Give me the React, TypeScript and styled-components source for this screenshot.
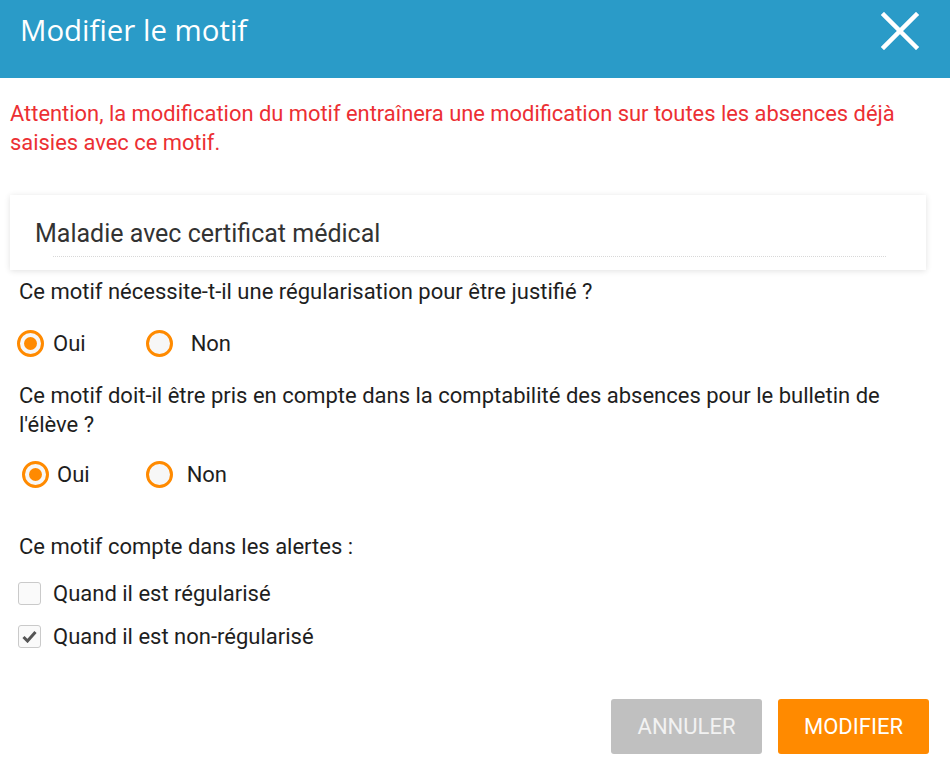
import React from "react";
import styled, { createGlobalStyle } from "styled-components";

const Global = createGlobalStyle`
  html, body { margin: 0; padding: 0; background: #fff; }
  body { font-family: Roboto, "Noto Sans", sans-serif; color: #222; width: 950px; height: 768px; overflow: hidden; }
  * { box-sizing: border-box; }
`;

const Dialog = styled.div`
  width: 950px;
  height: 768px;
  display: flex;
  flex-direction: column;
  background: #fff;
`;

const Header = styled.div`
  height: 78px;
  background: #2a9bc8;
  display: flex;
  align-items: center;
  justify-content: space-between;
  padding: 0 30px 0 20px;
  flex-shrink: 0;
`;

const Title = styled.h1`
  margin: 0;
  font-family: "Open Sans", Roboto, sans-serif;
  font-weight: 400;
  font-size: 29.4px;
  color: #fff;
  position: relative;
  top: -9px;
`;

const CloseBtn = styled.button`
  background: none;
  border: none;
  padding: 0;
  width: 40px;
  height: 40px;
  display: flex;
  align-items: center;
  justify-content: center;
  cursor: pointer;
  position: relative;
  top: -8px;
`;

const Body = styled.div`
  flex: 1;
  display: flex;
  flex-direction: column;
  padding: 21px 21px 0 10px;
`;

const Warning = styled.p`
  margin: 0;
  color: #ec2f33;
  font-size: 21.9px;
  line-height: 29px;
`;

const Card = styled.div`
  margin-top: 38px;
  width: 916px;
  height: 75px;
  background: #fff;
  box-shadow: 0 1px 6px rgba(0, 0, 0, 0.12);
  padding: 24px 0 0 25px;
`;

const CardText = styled.div`
  font-size: 25px;
  color: #333;
  line-height: 30px;
`;

const Dotted = styled.div`
  margin: 7px 0 0 18px;
  width: 833px;
  border-bottom: 1.5px dotted #d8d8d8;
`;

const Question = styled.p<{ $top: number }>`
  margin: ${(p) => p.$top}px 0 0 9px;
  font-size: 22px;
  line-height: 29px;
  color: #1e1e1e;
`;

const RadioRow = styled.div<{ $top: number; $left: number; $gap: number }>`
  display: flex;
  align-items: center;
  height: 27px;
  margin: ${(p) => p.$top}px 0 0 ${(p) => p.$left}px;
  gap: ${(p) => p.$gap}px;
`;

const RadioOpt = styled.label<{ $labelGap: number }>`
  display: flex;
  align-items: center;
  gap: ${(p) => p.$labelGap}px;
  font-size: 22px;
  color: #1e1e1e;
`;

const RadioCircle = styled.span<{ $on: boolean }>`
  width: 27px;
  height: 27px;
  border-radius: 50%;
  border: 3px solid #ff8a00;
  background: #f7f7f7;
  display: flex;
  align-items: center;
  justify-content: center;
  &::after {
    content: "";
    width: 13px;
    height: 13px;
    border-radius: 50%;
    background: ${(p) => (p.$on ? "#ff8a00" : "transparent")};
  }
`;

const CheckRow = styled.label<{ $top: number }>`
  display: flex;
  align-items: center;
  gap: 12px;
  height: 26px;
  margin: ${(p) => p.$top}px 0 0 8px;
  font-size: 22px;
  color: #1e1e1e;
`;

const Box = styled.span`
  width: 23px;
  height: 23px;
  border: 1px solid #cacaca;
  border-radius: 3px;
  background: #fafafa;
  display: flex;
  align-items: center;
  justify-content: center;
`;

const Footer = styled.div`
  display: flex;
  justify-content: flex-end;
  gap: 16px;
  margin-top: auto;
  padding: 0 0 14px 0;
`;

const Btn = styled.button<{ $primary?: boolean }>`
  width: 151px;
  height: 55px;
  border: none;
  border-radius: 3px;
  font-family: Roboto, sans-serif;
  font-size: 22px;
  text-transform: uppercase;
  color: ${(p) => (p.$primary ? "#fff" : "#f2f2f2")};
  background: ${(p) => (p.$primary ? "#ff8a00" : "#c0c0c0")};
`;

const Radio = ({ on, label, gap }: { on: boolean; label: string; gap: number }) => (
  <RadioOpt $labelGap={gap}>
    <RadioCircle $on={on} />
    {label}
  </RadioOpt>
);

export default function App() {
  return (
    <>
      <Global />
      <Dialog>
        <Header>
          <Title>Modifier le motif</Title>
          <CloseBtn aria-label="Fermer">
            <svg width="38" height="38" viewBox="0 0 38 38">
              <path d="M3 3 L35 35 M35 3 L3 35" stroke="#fff" strokeWidth="4.5" strokeLinecap="square" />
            </svg>
          </CloseBtn>
        </Header>
        <Body>
          <Warning>
            Attention, la modification du motif entraînera une modification sur toutes les absences déjà saisies avec ce motif.
          </Warning>
          <Card>
            <CardText>Maladie avec certificat médical</CardText>
            <Dotted />
          </Card>
          <Question $top={7}>Ce motif nécessite-t-il une régularisation pour être justifié ?</Question>
          <RadioRow $top={24} $left={7} $gap={60}>
            <Radio on label="Oui" gap={9} />
            <Radio on={false} label="Non" gap={18} />
          </RadioRow>
          <Question $top={24}>
            Ce motif doit-il être pris en compte dans la comptabilité des absences pour le bulletin de l'élève ?
          </Question>
          <RadioRow $top={22} $left={12} $gap={56}>
            <Radio on label="Oui" gap={8} />
            <Radio on={false} label="Non" gap={14} />
          </RadioRow>
          <Question $top={44}>Ce motif compte dans les alertes :</Question>
          <CheckRow $top={19}>
            <Box />
            Quand il est régularisé
          </CheckRow>
          <CheckRow $top={17}>
            <Box>
              <svg width="15" height="13" viewBox="0 0 15 13">
                <path d="M1.5 7 L5.5 11 L13.5 2" stroke="#555" strokeWidth="3" fill="none" />
              </svg>
            </Box>
            Quand il est non-régularisé
          </CheckRow>
          <Footer>
            <Btn>Annuler</Btn>
            <Btn $primary>Modifier</Btn>
          </Footer>
        </Body>
      </Dialog>
    </>
  );
}
